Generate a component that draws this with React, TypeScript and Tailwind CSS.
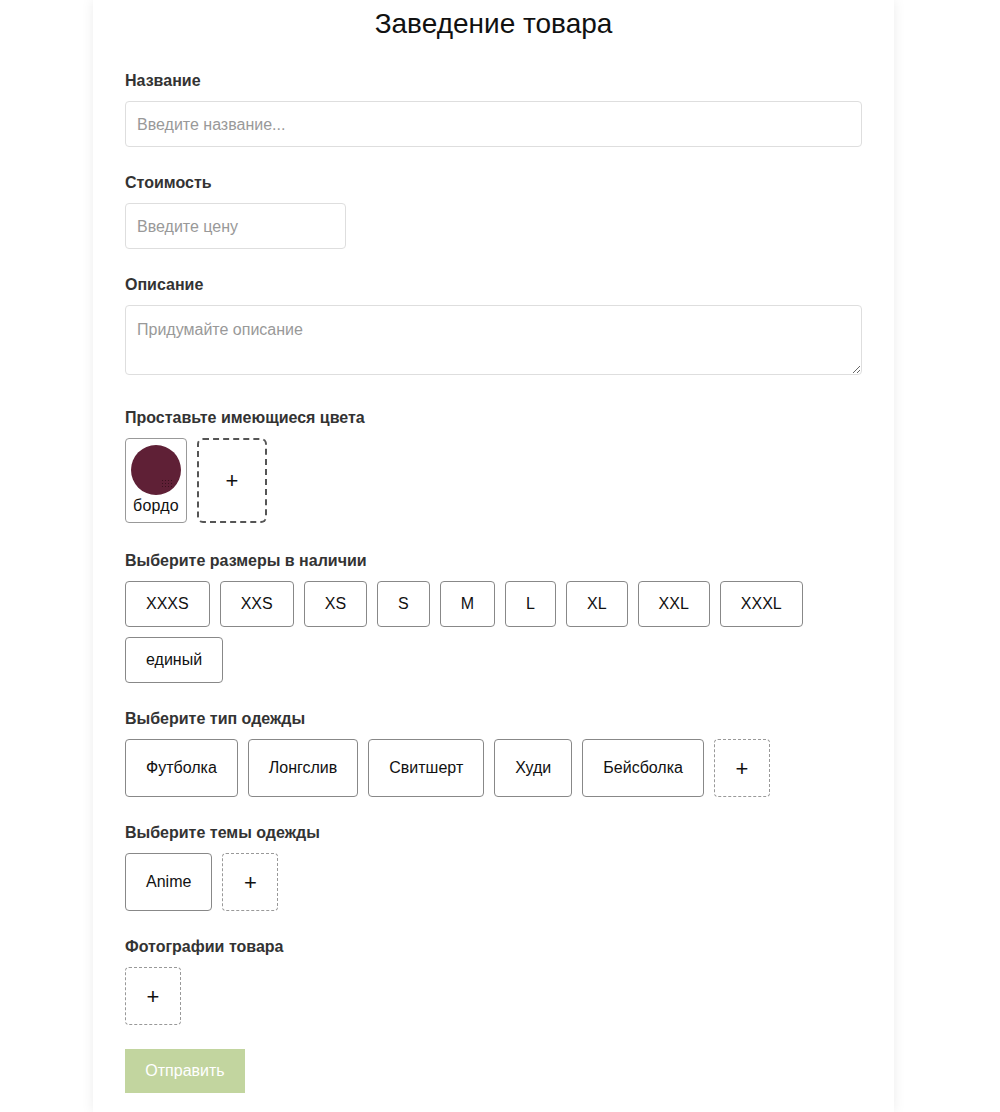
import React from "react";

const sizes = ["XXXS", "XXS", "XS", "S", "M", "L", "XL", "XXL", "XXXL", "единый"];
const types = ["Футболка", "Лонгслив", "Свитшерт", "Худи", "Бейсболка"];

function Label({ children }: { children: React.ReactNode }) {
  return (
    <div className="h-[20px] leading-[20px] text-[16px] font-bold text-[#333] mb-[10px]">{children}</div>
  );
}

export default function App() {
  return (
    <div className="min-h-[1112px] bg-white font-['Liberation_Sans',Arial,sans-serif] text-[#111]">
      <div className="ml-[93px] w-[801px] min-h-[1112px] bg-white shadow-[0_0_12px_rgba(0,0,0,0.08)] px-[32px] pt-[8px]">
        <h1 className="text-center text-[28px] leading-[32px] font-normal text-[#111] mb-[31px]">Заведение товара</h1>

        <div className="mb-[26px]">
          <Label>Название</Label>
          <input
            className="block w-full h-[46px] border border-[#dedede] rounded-[4px] px-[11px] pt-[2px] text-[16px] placeholder:text-[#999] outline-none"
            placeholder="Введите название..."
          />
        </div>

        <div className="mb-[26px]">
          <Label>Стоимость</Label>
          <input
            className="block w-[221px] h-[46px] border border-[#dedede] rounded-[4px] px-[11px] pt-[2px] text-[16px] placeholder:text-[#999] outline-none"
            placeholder="Введите цену"
          />
        </div>

        <div className="mb-[33px]">
          <Label>Описание</Label>
          <textarea
            className="block w-full h-[70px] border border-[#dedede] rounded-[4px] px-[11px] py-[12px] text-[16px] placeholder:text-[#999] outline-none"
            placeholder="Придумайте описание"
          />
        </div>

        <div className="mb-[28px]">
          <Label>Проставьте имеющиеся цвета</Label>
          <div className="flex gap-[10px]">
            <div className="w-[62px] h-[85px] border border-[#999] rounded-[4px] flex flex-col items-center pt-[6px]">
              <div className="relative w-[50px] h-[50px] rounded-full bg-[#5f2036] overflow-hidden">
                <div className="absolute right-[8px] bottom-[8px] w-[12px] h-[8px] bg-[radial-gradient(#2a0a14_0.6px,transparent_0.8px)] [background-size:3px_3px] opacity-70" />
              </div>
              <div className="text-[16px] leading-[20px] mt-[1px] tracking-[0.2px]">бордо</div>
            </div>
            <div className="w-[70px] h-[85px] border-2 border-dashed border-[#555] rounded-[6px] flex items-center justify-center text-[22px]">+</div>
          </div>
        </div>

        <div className="mb-[26px]">
          <Label>Выберите размеры в наличии</Label>
          <div className="flex flex-wrap gap-[10px]">
            {sizes.map((s) => (
              <div key={s} className="h-[46px] px-[20px] border border-[#888] rounded-[4px] flex items-center justify-center text-[16px]">
                {s}
              </div>
            ))}
          </div>
        </div>

        <div className="mb-[26px]">
          <Label>Выберите тип одежды</Label>
          <div className="flex flex-wrap gap-[10px]">
            {types.map((s) => (
              <div key={s} className="h-[58px] px-[20px] border border-[#888] rounded-[4px] flex items-center justify-center text-[16px]">
                {s}
              </div>
            ))}
            <div className="w-[56px] h-[58px] border border-dashed border-[#999] rounded-[4px] flex items-center justify-center text-[22px]">+</div>
          </div>
        </div>

        <div className="mb-[26px]">
          <Label>Выберите темы одежды</Label>
          <div className="flex flex-wrap gap-[10px]">
            <div className="h-[58px] px-[20px] border border-[#888] rounded-[4px] flex items-center justify-center text-[16px]">Anime</div>
            <div className="w-[56px] h-[58px] border border-dashed border-[#999] rounded-[4px] flex items-center justify-center text-[22px]">+</div>
          </div>
        </div>

        <div className="mb-[24px]">
          <Label>Фотографии товара</Label>
          <div className="w-[56px] h-[58px] border border-dashed border-[#999] rounded-[4px] flex items-center justify-center text-[22px]">+</div>
        </div>

        <button className="w-[120px] h-[44px] bg-[#c2d59f] text-white text-[16px]">Отправить</button>
      </div>
    </div>
  );
}
